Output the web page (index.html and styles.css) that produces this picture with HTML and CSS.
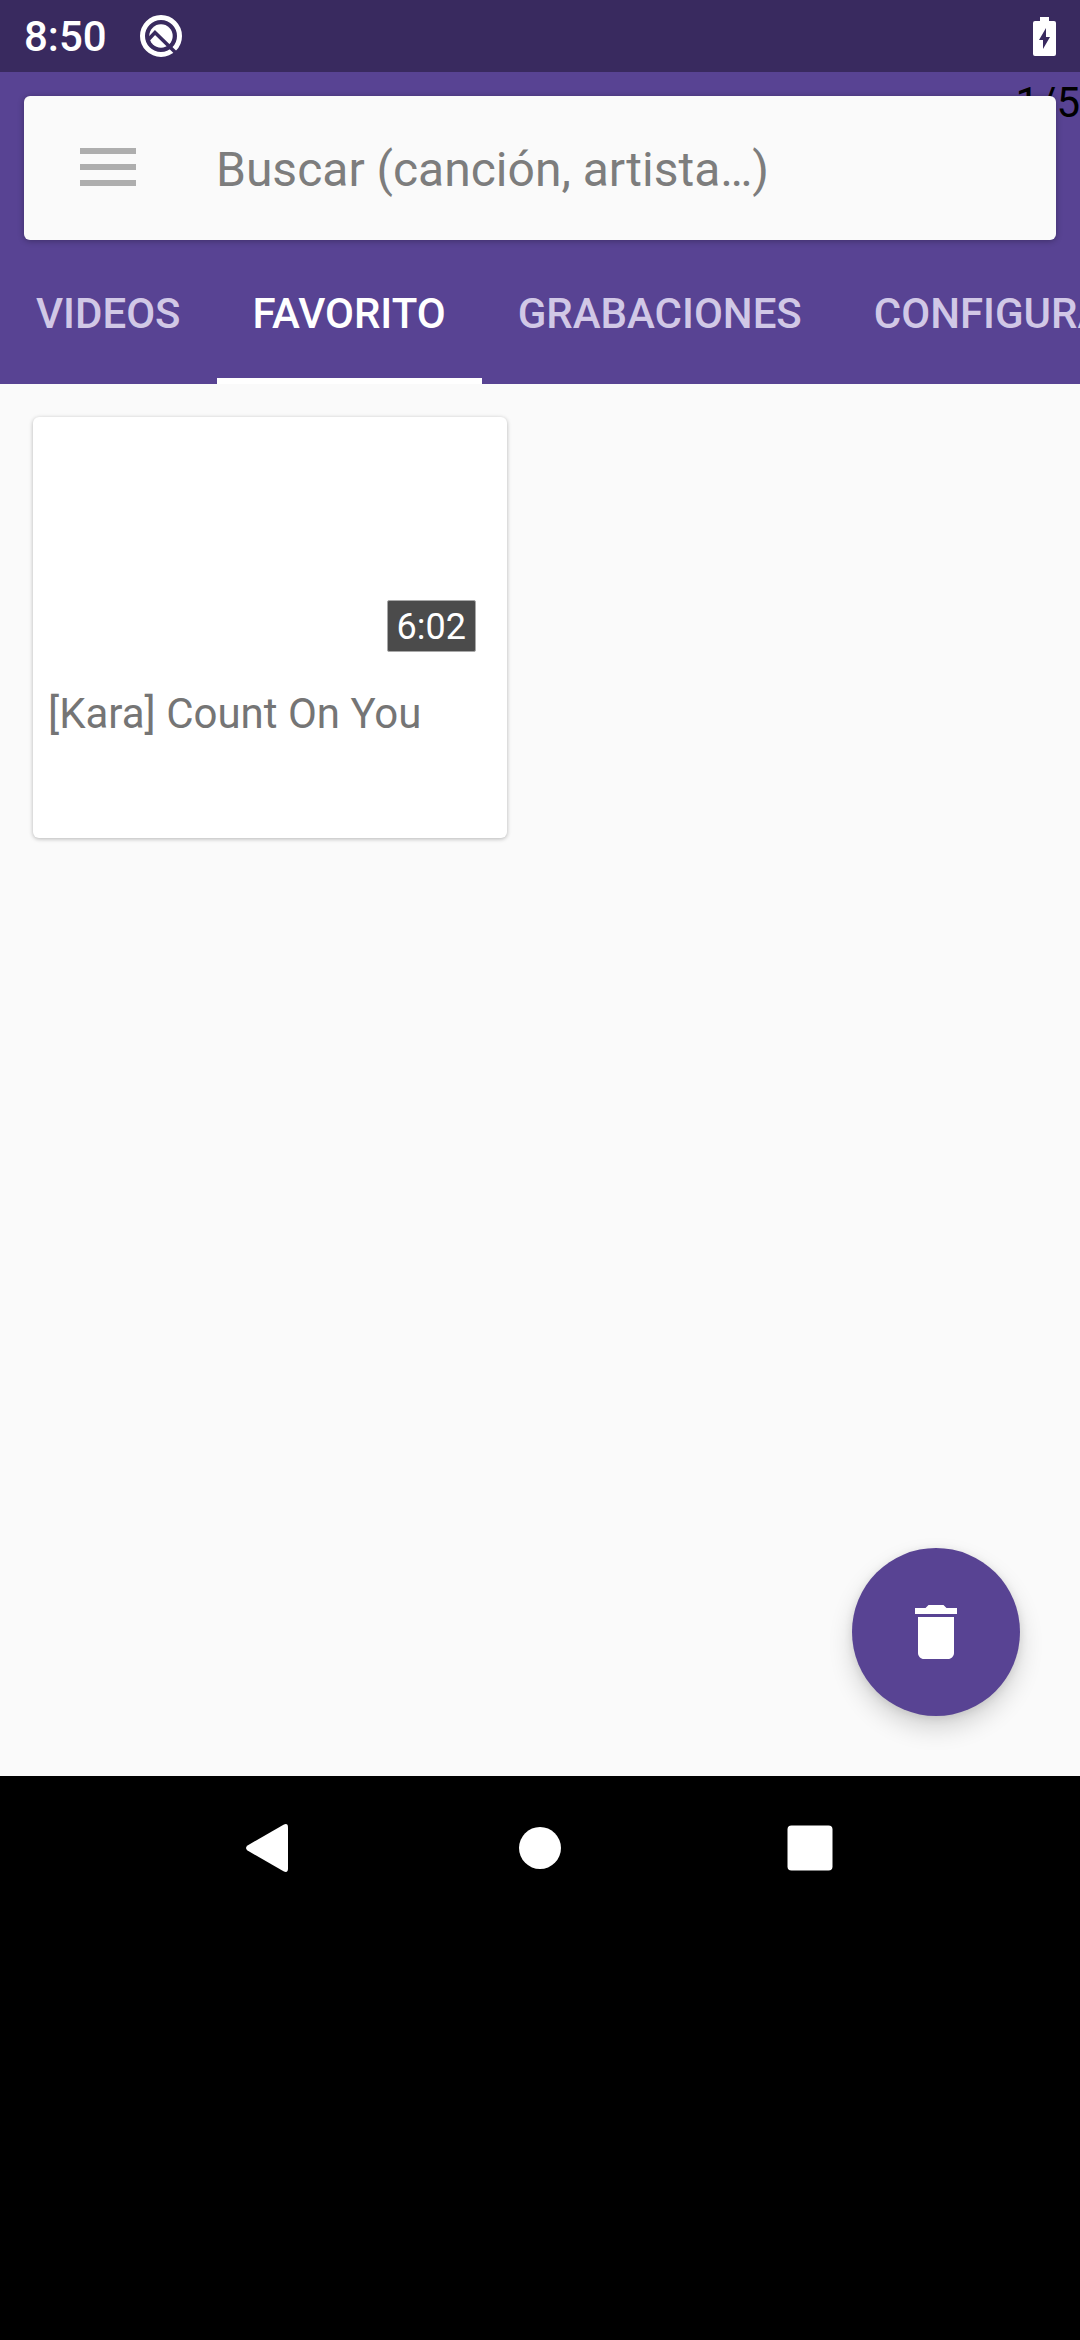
FILE: index.html
```html
<!DOCTYPE html>
<html lang="es">
<head>
<meta charset="utf-8">
<meta name="viewport" content="width=device-width, initial-scale=1">
<title>Favorito</title>
<link rel="stylesheet" href="styles.css">
</head>
<body>
<div class="status-bar">
  <time class="clock">8:50</time>
  <svg class="status-logo" viewBox="0 0 44 44" aria-hidden="true">
    <circle cx="22" cy="22" r="18.5" fill="none" stroke="#fff" stroke-width="5"/>
    <circle cx="22" cy="22" r="11.7" fill="#fff"/>
    <path d="M9 26 L16 18.500 L37 39" fill="none" stroke="#392a5f" stroke-width="3.600"/>
  </svg>
  <svg class="battery" viewBox="0 0 23 39" aria-hidden="true">
    <path d="M7 0h9v4h5a2 2 0 0 1 2 2v31a2 2 0 0 1-2 2H2a2 2 0 0 1-2-2V6a2 2 0 0 1 2-2h5z" fill="#fff"/>
    <path d="M13 11v9h4l-7 12v-9H6z" fill="#392a5f"/>
  </svg>
</div>
<header class="app-header">
  <span class="counter">1/5</span>
  <form class="search" role="search">
    <button class="menu" type="button" aria-label="Menú"><span class="line"></span><span class="line"></span><span class="line"></span></button>
    <input class="search-input" type="text" aria-label="Buscar" placeholder="Buscar (canción, artista…)">
  </form>
  <nav class="tabs">
    <a class="tab" href="#videos">VIDEOS</a>
    <a class="tab tab-active" href="#favorito" aria-current="page">FAVORITO</a>
    <a class="tab" href="#grabaciones">GRABACIONES</a>
    <a class="tab" href="#configuracion">CONFIGURACIÓN</a>
  </nav>
</header>
<main class="content">
  <div class="grid">
    <article class="card">
      <div class="thumb"><span class="duration">6:02</span></div>
      <h2 class="title">[Kara] Count On You</h2>
    </article>
  </div>
  <button class="fab" type="button" aria-label="Eliminar">
    <svg class="fab-icon" viewBox="0 0 24 24" aria-hidden="true"><path d="M6 19c0 1.100.9 2 2 2h8c1.100 0 2-.9 2-2V7H6v12zM19 4h-3.500l-1-1h-5l-1 1H5v2h14V4z" fill="#fff"/></svg>
  </button>
</main>
<footer class="system-nav">
  <button class="nav-button" type="button" aria-label="Atrás"><svg class="nav-icon" viewBox="0 0 54 54" aria-hidden="true"><path d="M4.500 24.500 40.500 3.700Q45 1.500 45 6.500V47.500Q45 52.500 40.500 50.300L4.500 29.500Q1.500 27 4.500 24.500z" fill="#fff"/></svg></button>
  <button class="nav-button" type="button" aria-label="Inicio"><svg class="nav-icon" viewBox="0 0 54 54" aria-hidden="true"><circle cx="27" cy="27" r="21" fill="#fff"/></svg></button>
  <button class="nav-button" type="button" aria-label="Recientes"><svg class="nav-icon" viewBox="0 0 54 54" aria-hidden="true"><rect x="4.500" y="4.500" width="45" height="45" rx="4" fill="#fff"/></svg></button>
</footer>
</body>
</html>
```
FILE: styles.css
```css
* { box-sizing: border-box; }

body {
  margin: 0;
  min-height: 100vh;
  display: flex;
  flex-direction: column;
  overflow-x: hidden;
  background: #fafafa;
  font-family: Roboto, "Noto Sans", sans-serif;
}

button {
  border: 0;
  padding: 0;
  background: none;
}

.status-bar {
  height: 72px;
  padding: 0 24px;
  display: flex;
  align-items: center;
  background: #392a5f;
  color: #fff;
}

.clock {
  padding-top: 2px;
  font-size: 42px;
  line-height: 48px;
  font-weight: 500;
}

.status-logo {
  width: 44px;
  height: 44px;
  margin-left: 32px;
}

.battery {
  width: 23px;
  height: 39px;
  margin-left: auto;
}

.app-header {
  position: relative;
  padding-top: 24px;
  background: #584393;
}

.counter {
  position: absolute;
  top: 0;
  right: 0;
  font-size: 42px;
  line-height: 62px;
  color: #000;
}

.search {
  position: relative;
  height: 144px;
  margin: 0 24px;
  display: flex;
  align-items: center;
  border-radius: 6px;
  background: #fafafa;
  box-shadow: 0 1px 6px rgba(0, 0, 0, 0.3);
}

.menu {
  width: 56px;
  margin: 0 80px 0 56px;
  padding-bottom: 2px;
  display: flex;
  flex-direction: column;
  gap: 10px;
}

.line {
  height: 6px;
  background: #aeaeae;
}

.search-input {
  flex: 1;
  min-width: 0;
  height: 96px;
  border: 0;
  padding: 2px 0 0;
  outline: 0;
  background: none;
  font-family: inherit;
  font-size: 48px;
  color: #212121;
}

.search-input::placeholder {
  color: #7d7d7d;
  opacity: 1;
}

.tabs {
  display: flex;
  overflow: hidden;
}

.tab {
  flex: none;
  height: 144px;
  padding: 0 36px;
  border-bottom: 6px solid transparent;
  font-size: 42px;
  line-height: 148px;
  font-weight: 500;
  color: #d1c8e6;
  text-decoration: none;
}

.tab-active {
  border-color: #fff;
  color: #fff;
}

.content {
  position: relative;
  flex: 1;
}

.grid {
  padding: 33px;
  display: grid;
  grid-template-columns: 1fr 1fr;
  gap: 66px;
}

.card {
  padding-bottom: 94px;
  border-radius: 6px;
  background: #fff;
  box-shadow: 0 1px 4px rgba(0, 0, 0, 0.28);
}

.thumb {
  height: 267px;
  padding: 0 31px 32px;
  display: flex;
  align-items: flex-end;
  justify-content: flex-end;
}

.duration {
  padding: 2px 9px 0;
  border: 1px solid #a8a8a8;
  border-radius: 2px;
  background: #4b4b4b;
  font-size: 36px;
  line-height: 48px;
  color: #fff;
}

.title {
  margin: 0;
  padding: 0 15px;
  font-size: 42px;
  line-height: 60px;
  font-weight: 400;
  color: #757575;
}

.fab {
  position: absolute;
  right: 60px;
  bottom: 60px;
  width: 168px;
  height: 168px;
  display: flex;
  align-items: center;
  justify-content: center;
  border-radius: 50%;
  background: #584393;
  box-shadow: 0 12px 24px rgba(0, 0, 0, 0.16), 0 2px 8px rgba(0, 0, 0, 0.1);
}

.fab-icon {
  width: 72px;
  height: 72px;
}

.system-nav {
  padding: 0 12.5% 420px;
  display: grid;
  grid-template-columns: repeat(3, 1fr);
  background: #000;
}

.nav-button {
  height: 144px;
  display: flex;
  align-items: center;
  justify-content: center;
}

.nav-icon {
  width: 54px;
  height: 54px;
}
```
